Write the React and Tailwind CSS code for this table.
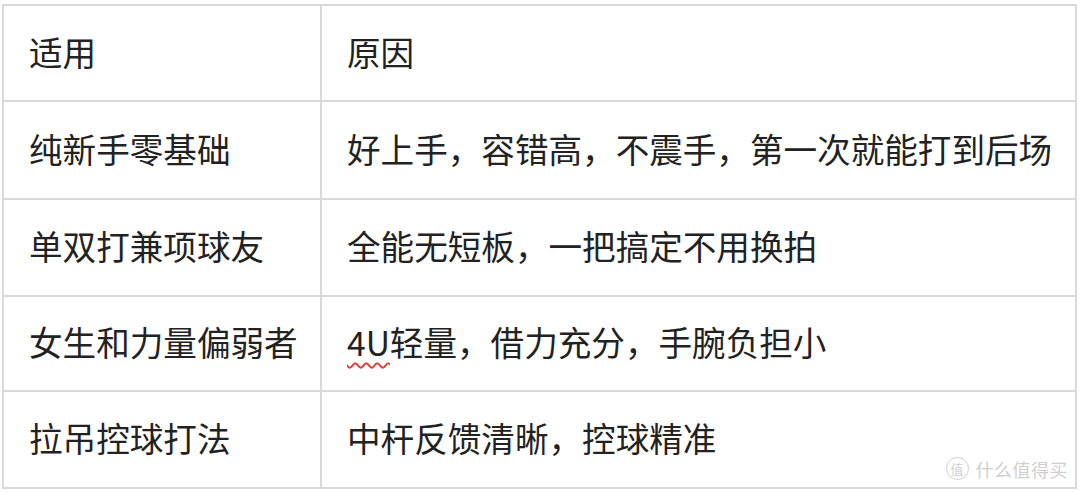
import React from 'react';

// rows of the comparison table (heights include the 2px top border)
const rows = [
    { h: 'h-[94px]', who: '适用', why: '原因' },
    { h: 'h-[98px]', who: '纯新手零基础', why: '好上手，容错高，不震手，第一次就能打到后场' },
    { h: 'h-[97px]', who: '单双打兼项球友', why: '全能无短板，一把搞定不用换拍' },
    { h: 'h-[95px]', who: '女生和力量偏弱者', why: null },
    { h: 'h-[97px]', who: '拉吊控球打法', why: '中杆反馈清晰，控球精准' },
];

const App = () => {
    return (
        <div
            className="relative w-[1080px] h-[493px] bg-white text-[#222] overflow-hidden"
            style={{ fontFamily: '"Noto Sans CJK SC", "Noto Sans", sans-serif' }}
        >
            <div className="ml-[2px] mt-[4px] w-[1075px] border-2 border-[#d9d9d9] flex flex-col">
                {rows.map((row, i) => (
                    <div
                        key={i}
                        className={`flex ${row.h} ${i > 0 ? 'border-t-2 border-[#d9d9d9]' : ''}`}
                    >
                        <div className="w-[318px] border-r-2 border-[#d9d9d9] flex items-center pl-[25px] pb-[3px] text-[33.6px] leading-none">
                            {row.who}
                        </div>
                        <div className="flex-1 flex items-center pl-[25px] pb-[3px] text-[33.6px] leading-none whitespace-nowrap">
                            {row.why ?? (
                                <>
                                    <span className="underline decoration-wavy decoration-[#e53935] decoration-[1.5px] underline-offset-[6px]">4U</span>
                                    轻量，借力充分，手腕负担小
                                </>
                            )}
                        </div>
                    </div>
                ))}
            </div>

            {/* watermark */}
            <div className="absolute right-[12px] bottom-[13px] flex items-center gap-[7px] text-[#cfcfcf]">
                <div className="w-[23px] h-[23px] rounded-full border-[1.5px] border-[#cfcfcf] flex items-center justify-center text-[13px] leading-none">
                    值
                </div>
                <span className="text-[18px] leading-none tracking-[0.5px]">什么值得买</span>
            </div>
        </div>
    );
};

export default App;
